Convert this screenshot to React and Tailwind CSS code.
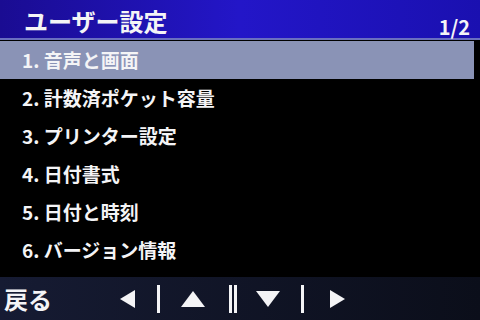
export default function App() {
  const items = [
    "1. 音声と画面",
    "2. 計数済ポケット容量",
    "3. プリンター設定",
    "4. 日付書式",
    "5. 日付と時刻",
    "6. バージョン情報",
  ];
  return (
    <div
      className="w-[480px] h-[320px] flex flex-col bg-black text-[#f4f4f6] overflow-hidden"
      style={{ fontFamily: '"Noto Sans CJK JP", "Noto Sans", sans-serif' }}
    >
      {/* Header */}
      <div className="h-[40px] flex items-end justify-between bg-gradient-to-r from-[#1a0c92] via-[#2316c8] to-[#1a10b0] border-b-2 border-[#6a6fc0]">
        <span className="pl-[24px] pb-[5px] text-[24px] font-bold leading-none">ユーザー設定</span>
        <span className="pr-[10px] pb-[1px] text-[20px] font-bold leading-none">1/2</span>
      </div>
      {/* Menu */}
      <div className="flex-1 flex flex-col pt-[1px]">
        {items.map((t, i) => (
          <div
            key={t}
            className={
              i === 0
                ? "h-[38px] w-[474px] flex items-center pl-[22px] bg-[#8a93b6] text-[19px] font-bold"
                : "h-[38px] flex items-center pl-[22px] text-[19px] font-bold"
            }
          >
            {t}
          </div>
        ))}
      </div>
      {/* Footer */}
      <div className="h-[43px] flex items-center bg-gradient-to-r from-[#161b33] to-[#0b0e1a]">
        <span className="pl-[4px] w-[110px] text-[24px] font-bold leading-none">戻る</span>
        <div className="flex items-center h-full">
          <svg width="20" height="20" viewBox="0 0 20 20" className="ml-[8px]"><polygon points="17,1 17,19 2,10" fill="#f4f4f6" /></svg>
          <div className="ml-[19px] w-[3px] h-[28px] bg-[#f4f4f6]" />
          <svg width="26" height="18" viewBox="0 0 26 18" className="ml-[20px]"><polygon points="13,1 25,17 1,17" fill="#f4f4f6" /></svg>
          <div className="ml-[23px] w-[3px] h-[28px] bg-[#f4f4f6]" />
          <div className="ml-[2px] w-[3px] h-[28px] bg-[#f4f4f6]" />
          <svg width="26" height="18" viewBox="0 0 26 18" className="ml-[18px]"><polygon points="1,1 25,1 13,17" fill="#f4f4f6" /></svg>
          <div className="ml-[20px] w-[3px] h-[28px] bg-[#f4f4f6]" />
          <svg width="20" height="20" viewBox="0 0 20 20" className="ml-[23px]"><polygon points="3,1 3,19 18,10" fill="#f4f4f6" /></svg>
        </div>
      </div>
    </div>
  );
}
